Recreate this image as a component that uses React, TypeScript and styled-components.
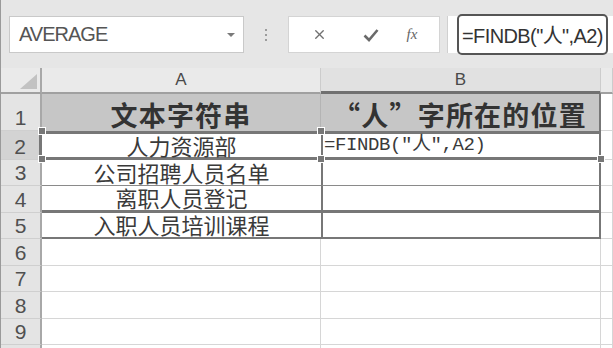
import styled, { createGlobalStyle } from 'styled-components'
import { X } from 'lucide-react'

const GlobalStyle = createGlobalStyle`
    html, body {
        margin: 0;
        padding: 0;
        background: #ffffff;
        overflow: hidden;
    }
    * {
        box-sizing: border-box;
    }
`

const DARK = '#777777'
const LIGHT = '#d6d6d6'
const CJK = `"Noto Sans CJK SC", "Liberation Sans", sans-serif`

const Page = styled.div`
    width: 613px;
    height: 348px;
    display: flex;
    flex-direction: column;
    border-left: 1px solid #9a9a9a;
    overflow: hidden;
    font-family: "Liberation Sans", Arial, sans-serif;
`

const Toolbar = styled.div`
    height: 68px;
    flex: none;
    background: #e6e6e6;
    display: flex;
    align-items: flex-start;
    padding: 16px 0 0 8px;
`

const NameBox = styled.div`
    width: 235px;
    height: 37px;
    background: #ffffff;
    border: 1px solid #c9c9c9;
    display: flex;
    align-items: center;
    justify-content: space-between;
    padding: 0 8px 0 9px;
    color: #555555;
    font-size: 20px;
    letter-spacing: -1px;
`

const Caret = styled.span`
    width: 0;
    height: 0;
    border-left: 4px solid transparent;
    border-right: 4px solid transparent;
    border-top: 4px solid #7a7a7a;
`

const Divider = styled.div`
    width: 44px;
    height: 37px;
    display: flex;
    flex-direction: column;
    align-items: center;
    justify-content: center;
    gap: 3px;

    span {
        width: 2px;
        height: 2px;
        background: #9c9c9c;
    }
`

const FxButtons = styled.div`
    width: 152px;
    height: 37px;
    background: #ffffff;
    border: 1px solid #d4d4d4;
    display: grid;
    grid-template-columns: 60px 44px 1fr;
    align-items: center;
    justify-items: center;
    color: #6a6a6a;
`

const FxLabel = styled.span`
    font-family: "Liberation Serif", serif;
    font-style: italic;
    font-size: 15px;
    color: #666666;
    margin-right: 8px;
`

const FormulaInput = styled.div`
    flex: 1;
    height: 37px;
    margin-left: 7px;
    background: #ffffff;
    border-left: 1px solid #d0d0d0;
    position: relative;
`

const FormulaFocus = styled.div`
    position: absolute;
    left: 9px;
    top: -2px;
    width: 151px;
    height: 41px;
    border: 2px solid #555555;
    border-radius: 5px;
    display: flex;
    align-items: center;
    padding-left: 3px;
    font-family: "Liberation Sans", ${CJK};
    font-size: 20px;
    letter-spacing: -0.6px;
    color: #333333;
    white-space: nowrap;
`

const Sheet = styled.div`
    flex: 1;
    position: relative;
    display: flex;
    flex-direction: column;
`

const Row = styled.div<{ $h: number }>`
    height: ${({ $h }) => $h}px;
    flex: none;
    display: grid;
    grid-template-columns: 41px 279px 280px 1fr;
`

const RowHead = styled.div<{ $active?: boolean }>`
    background: ${({ $active }) => ($active ? '#d3d3d3' : '#e4e4e4')};
    border-right: ${({ $active }) => ($active ? `3px solid ${DARK}` : '2px solid #a8a8a8')};
    border-bottom: 1px solid #cfcfcf;
    display: flex;
    align-items: flex-end;
    justify-content: center;
    padding-bottom: 1px;
    color: #505050;
    font-size: 21px;
    line-height: 1.05;
`

const ColHead = styled.div<{ $active?: boolean }>`
    background: ${({ $active }) => ($active ? '#e1e1e1' : '#eaeaea')};
    border-bottom: ${({ $active }) => ($active ? '3px solid #707070' : '2px solid #a0a0a0')};
    border-right: 1px solid #cccccc;
    display: flex;
    align-items: center;
    justify-content: center;
    color: #4a4a4a;
    font-size: 17px;
`

const Corner = styled.div`
    background: #eaeaea;
    border-right: 2px solid #a8a8a8;
    border-bottom: 2px solid #a0a0a0;
    display: flex;
    align-items: flex-end;
    justify-content: flex-end;
    padding: 0 3px 3px 0;
`

const Cell = styled.div<{
    $fill?: string
    $bold?: boolean
    $left?: boolean
    $mono?: boolean
    $top?: string
    $bottom?: string
    $bl?: string
    $br?: string
}>`
    background: ${({ $fill }) => $fill ?? '#ffffff'};
    border-top: ${({ $top }) => $top ?? 'none'};
    border-bottom: ${({ $bottom }) => $bottom ?? `1px solid ${LIGHT}`};
    border-left: ${({ $bl }) => $bl ?? 'none'};
    border-right: ${({ $br }) => $br ?? `1px solid ${LIGHT}`};
    display: flex;
    align-items: ${({ $bold }) => ($bold ? 'flex-end' : 'center')};
    justify-content: ${({ $left }) => ($left ? 'flex-start' : 'center')};
    padding: ${({ $left, $bold }) => ($left ? '0 0 0 1px' : $bold ? '0 0 2px 0' : '0')};
    font-family: ${({ $mono }) => ($mono ? `"Liberation Mono", ${CJK}` : CJK)};
    font-size: ${({ $bold, $mono }) => ($bold ? '27px' : $mono ? '19px' : '22px')};
    font-weight: ${({ $bold }) => ($bold ? 700 : 400)};
    letter-spacing: ${({ $bold, $mono }) => ($bold ? '1.2px' : $mono ? '-0.4px' : '0')};
    color: ${({ $bold }) => ($bold ? '#333333' : '#3a3a3a')};
    line-height: 1.05;
    white-space: nowrap;
`

const Handle = styled.span<{ $x: number; $y: number }>`
    position: absolute;
    left: ${({ $x }) => $x - 3}px;
    top: ${({ $y }) => $y - 3}px;
    width: 6px;
    height: 6px;
    background: #777777;
    outline: 1px solid #ffffff;
`

const thick = `3px solid ${DARK}`
const mid = `2px solid ${DARK}`
const thin = `1px solid #8a8a8a`

const listRows = [
    { n: 3, a: '公司招聘人员名单', h: 26, bottom: thin },
    { n: 4, a: '离职人员登记', h: 27, bottom: thick },
    { n: 5, a: '入职人员培训课程', h: 26, bottom: mid },
]

// row 10 only peeks in at the bottom edge, its label is below the fold
const emptyRows = [
    { n: 6, label: '6', h: 27 },
    { n: 7, label: '7', h: 26 },
    { n: 8, label: '8', h: 27 },
    { n: 9, label: '9', h: 26 },
    { n: 10, label: '', h: 26 },
]

export default function App() {
    return (
        <>
            <GlobalStyle />
            <Page>
                <Toolbar>
                    <NameBox>
                        AVERAGE
                        <Caret />
                    </NameBox>
                    <Divider>
                        <span />
                        <span />
                        <span />
                    </Divider>
                    <FxButtons>
                        <X size={15} strokeWidth={2.2} color="#707070" />
                        <svg width="16" height="14" viewBox="0 0 16 14">
                            <path d="M1.5 7.5 L6 12 L14.5 2" fill="none" stroke="#6a6a6a" strokeWidth="2.6" />
                        </svg>
                        <FxLabel>fx</FxLabel>
                    </FxButtons>
                    <FormulaInput>
                        <FormulaFocus>=FINDB("人",A2)</FormulaFocus>
                    </FormulaInput>
                </Toolbar>
                <Sheet>
                    <Row $h={26}>
                        <Corner>
                            <svg width="17" height="15" viewBox="0 0 17 15">
                                <path d="M17 0 L17 15 L0 15 Z" fill="#c2c2c2" />
                            </svg>
                        </Corner>
                        <ColHead>A</ColHead>
                        <ColHead $active>B</ColHead>
                        <ColHead />
                    </Row>
                    <Row $h={37}>
                        <RowHead>1</RowHead>
                        <Cell $bold $fill="#c6c6c6" $bottom="none" $br="1px solid #b4b4b4">
                            文本字符串
                        </Cell>
                        <Cell $bold $fill="#c6c6c6" $bottom="none" $br={mid}>
                            “人”字所在的位置
                        </Cell>
                        <Cell $bottom={`1px solid ${LIGHT}`} />
                    </Row>
                    <Row $h={29}>
                        <RowHead $active>2</RowHead>
                        <Cell $top={thick} $bottom={thick} $br="none">
                            人力资源部
                        </Cell>
                        <Cell $left $mono $top={thick} $bottom={thick} $bl={mid} $br={mid}>
                            =FINDB("人",A2)
                        </Cell>
                        <Cell />
                    </Row>
                    {listRows.map((r) => (
                        <Row key={r.n} $h={r.h}>
                            <RowHead>{r.n}</RowHead>
                            <Cell $bottom={r.bottom} $br="none">
                                {r.a}
                            </Cell>
                            <Cell $bottom={r.bottom} $bl={mid} $br={mid} />
                            <Cell />
                        </Row>
                    ))}
                    {emptyRows.map((r) => (
                        <Row key={r.n} $h={r.h}>
                            <RowHead>{r.label}</RowHead>
                            <Cell />
                            <Cell />
                            <Cell />
                        </Row>
                    ))}
                    <Handle $x={41} $y={63} />
                    <Handle $x={41} $y={91} />
                    <Handle $x={320} $y={63} />
                    <Handle $x={320} $y={91} />
                    <Handle $x={600} $y={91} />
                </Sheet>
            </Page>
        </>
    )
}
